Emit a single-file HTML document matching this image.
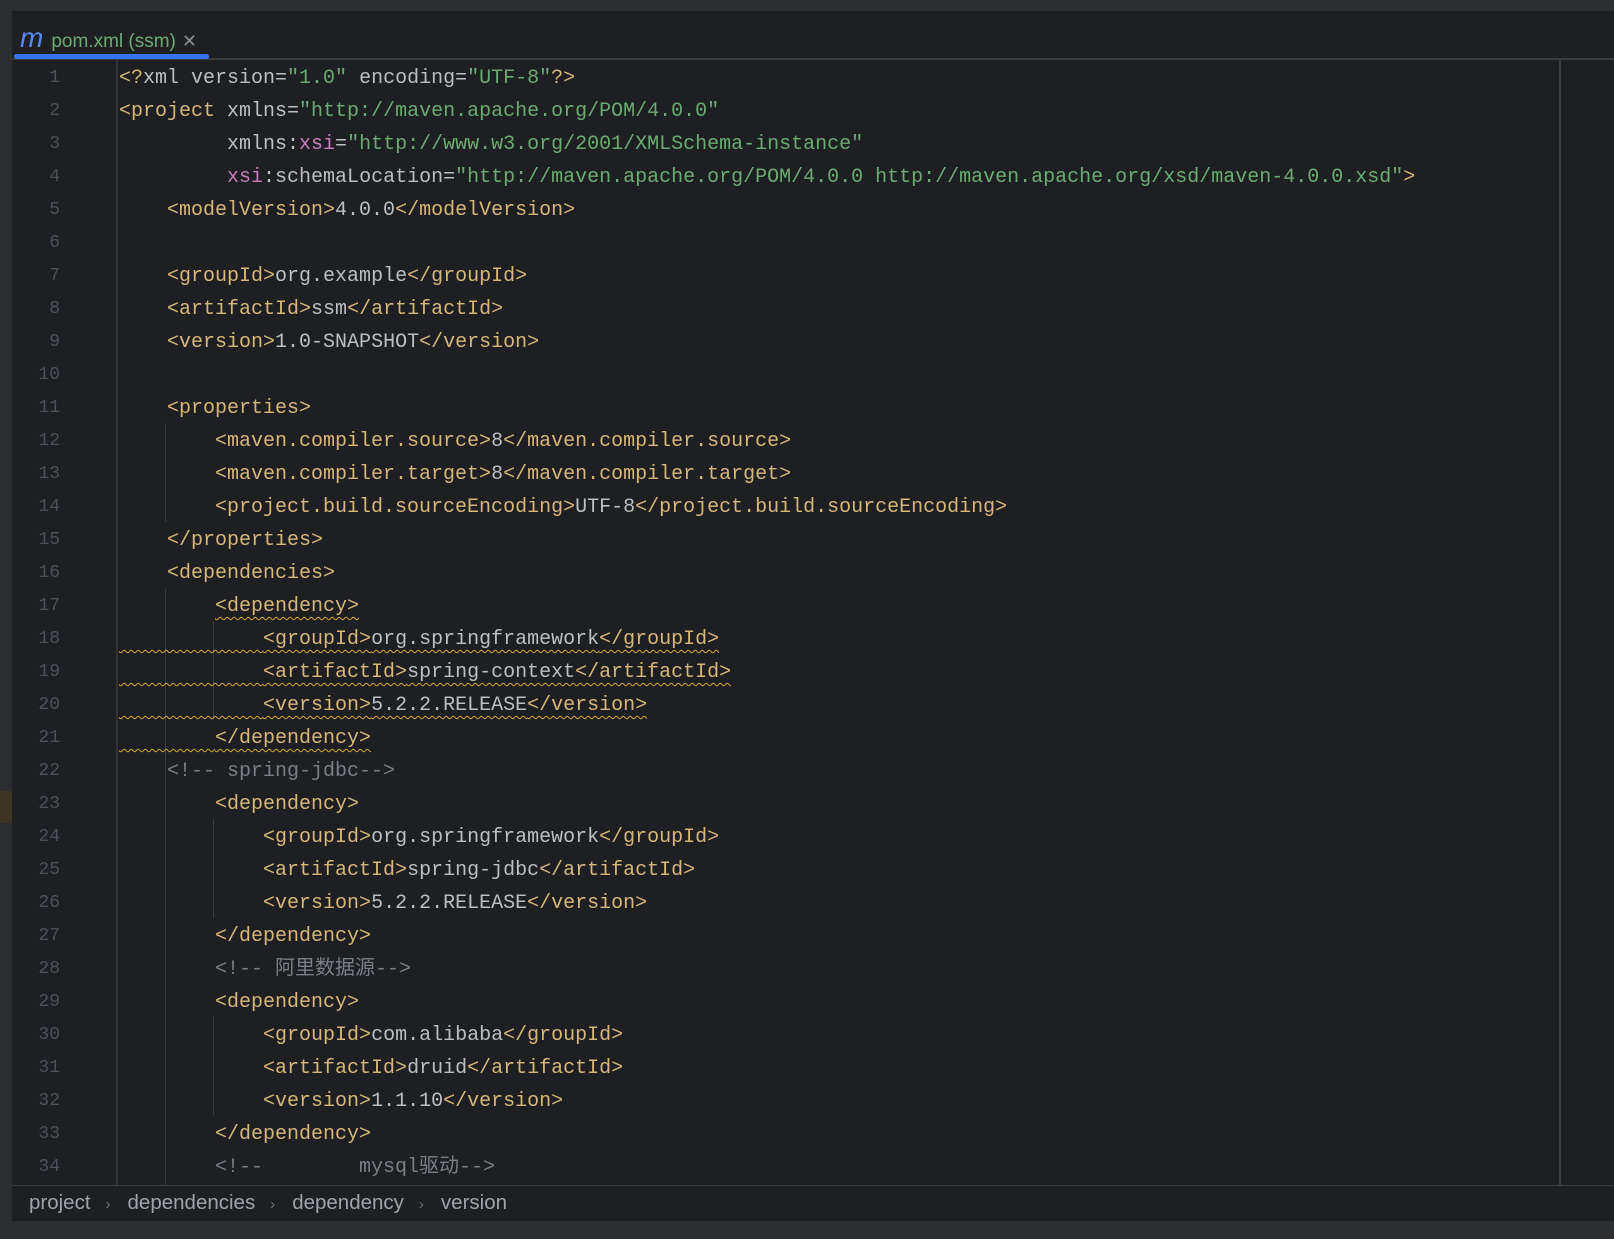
<!DOCTYPE html>
<html><head><meta charset="utf-8"><style>
body{margin:0;width:1614px;height:1239px;background:#1e1f22;overflow:hidden;position:relative;font-family:"Liberation Mono","Noto Sans CJK SC",monospace}
.top{position:absolute;left:0;top:0;width:1614px;height:11px;background:#2b2d30}
.ls{position:absolute;left:0;top:11px;width:12px;height:1228px;background:#2b2d30}
.mk{position:absolute;left:0;top:791px;width:12px;height:32px;background:#3e3424}
.tabline{position:absolute;left:12px;top:58px;width:1602px;height:2px;background:#393b40}
.tabu{position:absolute;left:14px;top:54px;width:195px;height:5px;background:#3574f0;border-radius:3px}
.tab{position:absolute;left:20px;top:22px;font:19px "Liberation Sans",sans-serif;color:#6aab73;white-space:nowrap}
.tab i{color:#548af7;font-size:28px;font-family:"Liberation Sans",sans-serif;margin-right:8px;position:relative;top:0px}
.tab .x{color:#8a8d93;margin-left:6px;font-size:18px}
.gl{position:absolute;left:116px;top:60px;width:2px;height:1125px;background:#313338}
.rm{position:absolute;left:1559px;top:60px;width:2px;height:1125px;background:#393b40}
.ig{position:absolute;width:1px;background:#393b40}
.ln{position:absolute;left:0;width:60px;text-align:right;color:#4b5059;font-size:18px;line-height:33px;margin-top:2px}
.c{position:absolute;left:119px;white-space:pre;font-size:20px;line-height:33px;color:#bcbec4;margin-top:2px}
.t{color:#d5b778}.s{color:#6aab73}.p{color:#c77dbb}.m{color:#7a7e85}
.w{text-decoration:underline wavy #d5a92e;text-underline-offset:5px;text-decoration-thickness:1px}
.bc{position:absolute;left:12px;top:1185px;width:1602px;height:36px;background:#1e1f22;border-top:1px solid #393b40;font:20.5px "Liberation Sans",sans-serif;color:#a0a3aa;line-height:34px}
.bc span{margin:0 0 0 17px}.bc b{font-weight:normal;color:#6f737a;margin-left:15px;font-size:15px}
.bot{position:absolute;left:0;top:1221px;width:1614px;height:18px;background:#2b2d30}
</style></head><body>
<div class="top"></div><div class="ls"></div><div class="mk"></div>
<div class="tab"><i>m</i>pom.xml (ssm)<span class="x">✕</span></div>
<div class="tabline"></div><div class="tabu"></div>
<div class="gl"></div><div class="rm"></div>
<div class="ig" style="left:165px;top:423px;height:99px"></div>
<div class="ig" style="left:165px;top:588px;height:597px"></div>
<div class="ig" style="left:213px;top:621px;height:99px"></div>
<div class="ig" style="left:213px;top:819px;height:99px"></div>
<div class="ig" style="left:213px;top:1017px;height:99px"></div>
<div class="ln" style="top:60px">1</div><div class="c" style="top:60px"><span class="t">&lt;?</span>xml version=<span class="s">"1.0"</span> encoding=<span class="s">"UTF-8"</span><span class="t">?&gt;</span></div>
<div class="ln" style="top:93px">2</div><div class="c" style="top:93px"><span class="t">&lt;project </span>xmlns=<span class="s">"http://maven.apache.org/POM/4.0.0"</span></div>
<div class="ln" style="top:126px">3</div><div class="c" style="top:126px">         xmlns:<span class="p">xsi</span>=<span class="s">"http://www.w3.org/2001/XMLSchema-instance"</span></div>
<div class="ln" style="top:159px">4</div><div class="c" style="top:159px">         <span class="p">xsi</span>:schemaLocation=<span class="s">"http://maven.apache.org/POM/4.0.0 http://maven.apache.org/xsd/maven-4.0.0.xsd"</span><span class="t">&gt;</span></div>
<div class="ln" style="top:192px">5</div><div class="c" style="top:192px">    <span class="t">&lt;modelVersion&gt;</span>4.0.0<span class="t">&lt;/modelVersion&gt;</span></div>
<div class="ln" style="top:225px">6</div>
<div class="ln" style="top:258px">7</div><div class="c" style="top:258px">    <span class="t">&lt;groupId&gt;</span>org.example<span class="t">&lt;/groupId&gt;</span></div>
<div class="ln" style="top:291px">8</div><div class="c" style="top:291px">    <span class="t">&lt;artifactId&gt;</span>ssm<span class="t">&lt;/artifactId&gt;</span></div>
<div class="ln" style="top:324px">9</div><div class="c" style="top:324px">    <span class="t">&lt;version&gt;</span>1.0-SNAPSHOT<span class="t">&lt;/version&gt;</span></div>
<div class="ln" style="top:357px">10</div>
<div class="ln" style="top:390px">11</div><div class="c" style="top:390px">    <span class="t">&lt;properties&gt;</span></div>
<div class="ln" style="top:423px">12</div><div class="c" style="top:423px">        <span class="t">&lt;maven.compiler.source&gt;</span>8<span class="t">&lt;/maven.compiler.source&gt;</span></div>
<div class="ln" style="top:456px">13</div><div class="c" style="top:456px">        <span class="t">&lt;maven.compiler.target&gt;</span>8<span class="t">&lt;/maven.compiler.target&gt;</span></div>
<div class="ln" style="top:489px">14</div><div class="c" style="top:489px">        <span class="t">&lt;project.build.sourceEncoding&gt;</span>UTF-8<span class="t">&lt;/project.build.sourceEncoding&gt;</span></div>
<div class="ln" style="top:522px">15</div><div class="c" style="top:522px">    <span class="t">&lt;/properties&gt;</span></div>
<div class="ln" style="top:555px">16</div><div class="c" style="top:555px">    <span class="t">&lt;dependencies&gt;</span></div>
<div class="ln" style="top:588px">17</div><div class="c" style="top:588px">        <span class="t w">&lt;dependency&gt;</span></div>
<div class="ln" style="top:621px">18</div><div class="c" style="top:621px"><span class="w">            <span class="t">&lt;groupId&gt;</span>org.springframework<span class="t">&lt;/groupId&gt;</span></span></div>
<div class="ln" style="top:654px">19</div><div class="c" style="top:654px"><span class="w">            <span class="t">&lt;artifactId&gt;</span>spring-context<span class="t">&lt;/artifactId&gt;</span></span></div>
<div class="ln" style="top:687px">20</div><div class="c" style="top:687px"><span class="w">            <span class="t">&lt;version&gt;</span>5.2.2.RELEASE<span class="t">&lt;/version&gt;</span></span></div>
<div class="ln" style="top:720px">21</div><div class="c" style="top:720px"><span class="w">        <span class="t">&lt;/dependency&gt;</span></span></div>
<div class="ln" style="top:753px">22</div><div class="c" style="top:753px">    <span class="m">&lt;!-- spring-jdbc--&gt;</span></div>
<div class="ln" style="top:786px">23</div><div class="c" style="top:786px">        <span class="t">&lt;dependency&gt;</span></div>
<div class="ln" style="top:819px">24</div><div class="c" style="top:819px">            <span class="t">&lt;groupId&gt;</span>org.springframework<span class="t">&lt;/groupId&gt;</span></div>
<div class="ln" style="top:852px">25</div><div class="c" style="top:852px">            <span class="t">&lt;artifactId&gt;</span>spring-jdbc<span class="t">&lt;/artifactId&gt;</span></div>
<div class="ln" style="top:885px">26</div><div class="c" style="top:885px">            <span class="t">&lt;version&gt;</span>5.2.2.RELEASE<span class="t">&lt;/version&gt;</span></div>
<div class="ln" style="top:918px">27</div><div class="c" style="top:918px">        <span class="t">&lt;/dependency&gt;</span></div>
<div class="ln" style="top:951px">28</div><div class="c" style="top:951px">        <span class="m">&lt;!-- 阿里数据源--&gt;</span></div>
<div class="ln" style="top:984px">29</div><div class="c" style="top:984px">        <span class="t">&lt;dependency&gt;</span></div>
<div class="ln" style="top:1017px">30</div><div class="c" style="top:1017px">            <span class="t">&lt;groupId&gt;</span>com.alibaba<span class="t">&lt;/groupId&gt;</span></div>
<div class="ln" style="top:1050px">31</div><div class="c" style="top:1050px">            <span class="t">&lt;artifactId&gt;</span>druid<span class="t">&lt;/artifactId&gt;</span></div>
<div class="ln" style="top:1083px">32</div><div class="c" style="top:1083px">            <span class="t">&lt;version&gt;</span>1.1.10<span class="t">&lt;/version&gt;</span></div>
<div class="ln" style="top:1116px">33</div><div class="c" style="top:1116px">        <span class="t">&lt;/dependency&gt;</span></div>
<div class="ln" style="top:1149px">34</div><div class="c" style="top:1149px">        <span class="m">&lt;!--        mysql驱动--&gt;</span></div>
<div class="bc"><span>project</span><b>›</b><span>dependencies</span><b>›</b><span>dependency</span><b>›</b><span>version</span></div>
<div class="bot"></div>
</body></html>
